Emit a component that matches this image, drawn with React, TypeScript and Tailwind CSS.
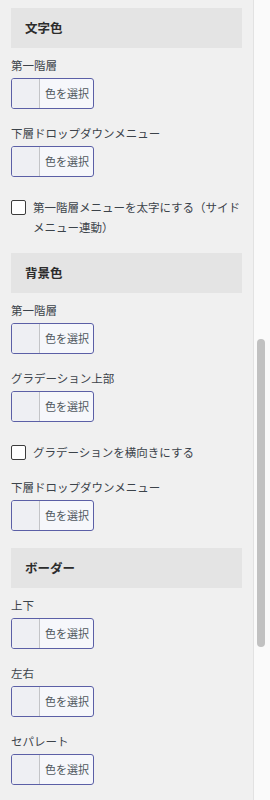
import React from "react";

type Item =
  | { kind: "header"; text: string; mt: string }
  | { kind: "color"; label: string; mt: string }
  | { kind: "check"; label: string; mt: string };

const items: Item[] = [
  { kind: "header", text: "文字色", mt: "mt-0" },
  { kind: "color", label: "第一階層", mt: "mt-[7px]" },
  { kind: "color", label: "下層ドロップダウンメニュー", mt: "mt-[14px]" },
  { kind: "check", label: "第一階層メニューを太字にする（サイドメニュー連動）", mt: "mt-[20px]" },
  { kind: "header", text: "背景色", mt: "mt-[16px]" },
  { kind: "color", label: "第一階層", mt: "mt-[7px]" },
  { kind: "color", label: "グラデーション上部", mt: "mt-[14px]" },
  { kind: "check", label: "グラデーションを横向きにする", mt: "mt-[20px]" },
  { kind: "color", label: "下層ドロップダウンメニュー", mt: "mt-[15px]" },
  { kind: "header", text: "ボーダー", mt: "mt-[17px]" },
  { kind: "color", label: "上下", mt: "mt-[7px]" },
  { kind: "color", label: "左右", mt: "mt-[14px]" },
  { kind: "color", label: "セパレート", mt: "mt-[14px]" },
];

function SectionHeader({ text, mt }: { text: string; mt: string }) {
  return (
    <div className={`${mt} flex h-[40px] items-center bg-[#e4e4e4] pl-[14px] text-[12.5px] font-bold text-[#2c2c2c]`}>
      {text}
    </div>
  );
}

function ColorField({ label, mt }: { label: string; mt: string }) {
  return (
    <div className={mt}>
      <div className="text-[11.5px] leading-[20px] text-[#3c434a]">{label}</div>
      <button className="mt-[3px] flex h-[31px] w-[83px] overflow-hidden rounded-[3px] border border-[#5b5fa6] bg-[#f6f7fb] p-0">
        <span className="h-full w-[28px] border-r border-[#c3c4c7] bg-[#eeeff3]" />
        <span className="flex h-full flex-1 items-center pl-[5px] text-[11px] text-[#50575e]">色を選択</span>
      </button>
    </div>
  );
}

function CheckField({ label, mt }: { label: string; mt: string }) {
  return (
    <label className={`${mt} flex items-start gap-[7px]`}>
      <span className="mt-[3px] h-[15px] w-[15px] shrink-0 rounded-[2px] border border-[#3c3c3c] bg-white" />
      <span className="text-[11.5px] leading-[20px] text-[#3c434a]">{label}</span>
    </label>
  );
}

export default function App() {
  return (
    <div className="flex h-[800px] w-[270px] overflow-hidden bg-[#f0f0f0] font-['Noto_Sans_CJK_JP','Noto_Sans',sans-serif]">
      <div className="flex w-[254px] shrink-0 flex-col border-r border-[#e2e2e2] px-[11px] pt-[8px]">
        {items.map((it, i) =>
          it.kind === "header" ? (
            <SectionHeader key={i} text={it.text} mt={it.mt} />
          ) : it.kind === "color" ? (
            <ColorField key={i} label={it.label} mt={it.mt} />
          ) : (
            <CheckField key={i} label={it.label} mt={it.mt} />
          )
        )}
      </div>
      {/* scrollbar */}
      <div className="flex-1 bg-[#fafafa] pl-[3px] pt-[339px]">
        <div className="h-[308px] w-[8px] rounded-[4px] bg-[#c1c1c1]" />
      </div>
    </div>
  );
}
